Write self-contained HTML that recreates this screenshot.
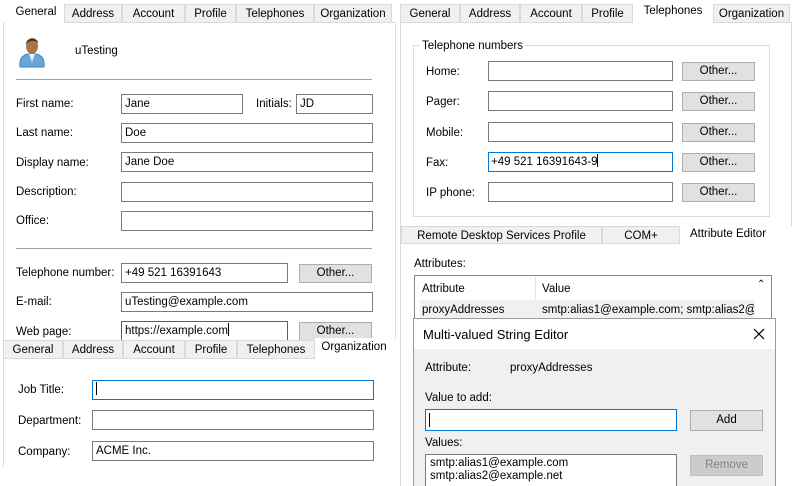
<!DOCTYPE html>
<html><head><meta charset="utf-8"><style>
*{box-sizing:border-box;margin:0;padding:0}
html,body{width:799px;height:486px;overflow:hidden}
body{background:#fff;position:relative;font-family:"Liberation Sans",sans-serif;font-size:11.5px;color:#000}
.a{position:absolute;white-space:nowrap}
.t{position:absolute;background:#f0f0f0;border:1px solid #d9d9d9;border-bottom:none;text-align:center;line-height:18px;height:19px;white-space:nowrap}
.ts{position:absolute;text-align:center;line-height:18px;background:#fff;white-space:nowrap}
.i{position:absolute;border:1px solid #7a7a7a;background:#fff;height:20px;line-height:18px;padding-left:3px;white-space:nowrap;overflow:hidden}
.f{border-color:#0078d7}
.b{position:absolute;border:1px solid #adadad;background:#e1e1e1;height:19px;line-height:17px;text-align:center}
.l{position:absolute;line-height:14px;white-space:nowrap}
.hr{position:absolute;height:1px;background:#a0a0a0}
.cur{display:inline-block;width:1px;height:13px;background:#000;vertical-align:-2px}
</style></head><body>
<!-- left top panel -->
<div class="a" style="left:3px;top:22px;width:393px;height:318px;border-left:1px solid #d9d9d9;border-right:1px solid #e3e3e3"></div>
<div class="ts" style="left:8px;top:3px;width:56px">General</div>
<div class="t" style="left:64px;top:4px;width:58px">Address</div>
<div class="t" style="left:122px;top:4px;width:63px">Account</div>
<div class="t" style="left:185px;top:4px;width:51px">Profile</div>
<div class="t" style="left:236px;top:4px;width:78px">Telephones</div>
<div class="t" style="left:314px;top:4px;width:78px">Organization</div>
<div class="a" style="left:64px;top:22px;width:332px;height:1px;background:#d9d9d9"></div>
<svg class="a" style="left:18px;top:34px" width="28" height="34" viewBox="0 0 28 34">
<path d="M2 33 C1 24 5 21 10 20 L18 20 C23 21 27 24 26 33 Z" fill="#6aa7d8" stroke="#3f7fb8"/>
<path d="M11 20 L14 28 L17 20 Z" fill="#e8f2fb"/>
<ellipse cx="14" cy="12" rx="6" ry="8" fill="#a8764a"/>
<path d="M8 10 C8 3 20 3 20 9 C18 6 11 6 8 10Z" fill="#3a3a3a"/>
</svg>
<div class="l" style="left:75px;top:44px">uTesting</div>
<div class="hr" style="left:16px;top:79px;width:356px"></div>
<div class="l" style="left:16px;top:97px">First name:</div>
<div class="i" style="left:121px;top:94px;width:122px">Jane</div>
<div class="l" style="left:256px;top:97px">Initials:</div>
<div class="i" style="left:296px;top:94px;width:77px">JD</div>
<div class="l" style="left:16px;top:126px">Last name:</div>
<div class="i" style="left:121px;top:123px;width:252px">Doe</div>
<div class="l" style="left:16px;top:156px">Display name:</div>
<div class="i" style="left:121px;top:152px;width:252px">Jane Doe</div>
<div class="l" style="left:16px;top:185px">Description:</div>
<div class="i" style="left:121px;top:182px;width:252px"></div>
<div class="l" style="left:16px;top:214px">Office:</div>
<div class="i" style="left:121px;top:211px;width:252px"></div>
<div class="hr" style="left:16px;top:248px;width:356px"></div>
<div class="l" style="left:16px;top:266px">Telephone number:</div>
<div class="i" style="left:121px;top:263px;width:167px">+49 521 16391643</div>
<div class="b" style="left:299px;top:264px;width:73px">Other...</div>
<div class="l" style="left:16px;top:295px">E-mail:</div>
<div class="i" style="left:121px;top:292px;width:252px">uTesting@example.com</div>
<div class="l" style="left:16px;top:325px">Web page:</div>
<div class="i f" style="left:121px;top:321px;width:167px">https://example.com<span class="cur"></span></div>
<div class="b" style="left:299px;top:322px;width:73px">Other...</div>
<!-- bottom left panel -->
<div class="a" style="left:0;top:340px;width:398px;height:146px;background:#fff"></div>
<div class="a" style="left:3px;top:358px;width:393px;height:109px;border-left:1px solid #d9d9d9"></div>
<div class="t" style="left:3px;top:340px;width:60px">General</div>
<div class="t" style="left:63px;top:340px;width:60px">Address</div>
<div class="t" style="left:123px;top:340px;width:62px">Account</div>
<div class="t" style="left:185px;top:340px;width:52px">Profile</div>
<div class="t" style="left:237px;top:340px;width:78px">Telephones</div>
<div class="a" style="left:3px;top:358px;width:312px;height:1px;background:#d9d9d9"></div>
<div class="ts" style="left:315px;top:338px;width:78px">Organization</div>
<div class="l" style="left:18px;top:383px">Job Title:</div>
<div class="i f" style="left:92px;top:380px;width:282px"><span class="cur"></span></div>
<div class="l" style="left:18px;top:414px">Department:</div>
<div class="i" style="left:92px;top:410px;width:282px"></div>
<div class="l" style="left:18px;top:445px">Company:</div>
<div class="i" style="left:92px;top:441px;width:282px">ACME Inc.</div>
<!-- right top panel -->
<div class="a" style="left:400px;top:22px;width:392px;height:204px;border-left:1px solid #d9d9d9;border-right:1px solid #d9d9d9"></div>
<div class="t" style="left:400px;top:4px;width:60px">General</div>
<div class="t" style="left:460px;top:4px;width:60px">Address</div>
<div class="t" style="left:520px;top:4px;width:62px">Account</div>
<div class="t" style="left:582px;top:4px;width:51px">Profile</div>
<div class="ts" style="left:633px;top:2px;width:80px">Telephones</div>
<div class="t" style="left:713px;top:4px;width:77px">Organization</div>
<div class="a" style="left:400px;top:22px;width:233px;height:1px;background:#d9d9d9"></div>
<div class="a" style="left:713px;top:22px;width:79px;height:1px;background:#d9d9d9"></div>
<div class="a" style="left:413px;top:45px;width:357px;height:172px;border:1px solid #dcdcdc"></div>
<div class="l" style="left:420px;top:39px;background:#fff;padding:0 2px">Telephone numbers</div>
<div class="l" style="left:426px;top:65px">Home:</div>
<div class="i" style="left:488px;top:61px;width:185px"></div>
<div class="b" style="left:682px;top:62px;width:73px">Other...</div>
<div class="l" style="left:426px;top:95px">Pager:</div>
<div class="i" style="left:488px;top:91px;width:185px"></div>
<div class="b" style="left:682px;top:92px;width:73px">Other...</div>
<div class="l" style="left:426px;top:126px">Mobile:</div>
<div class="i" style="left:488px;top:122px;width:185px"></div>
<div class="b" style="left:682px;top:123px;width:73px">Other...</div>
<div class="l" style="left:426px;top:156px">Fax:</div>
<div class="i f" style="left:488px;top:152px;width:185px;padding-left:2px">+49 521 16391643-9<span class="cur"></span></div>
<div class="b" style="left:682px;top:153px;width:73px">Other...</div>
<div class="l" style="left:426px;top:186px">IP phone:</div>
<div class="i" style="left:488px;top:182px;width:185px"></div>
<div class="b" style="left:682px;top:183px;width:73px">Other...</div>
<!-- right bottom panel -->
<div class="a" style="left:400px;top:226px;width:399px;height:260px;background:#fff;border-left:1px solid #d9d9d9"></div>
<div class="t" style="left:401px;top:226px;width:201px;height:18px">Remote Desktop Services Profile</div>
<div class="t" style="left:602px;top:226px;width:78px;height:18px">COM+</div>
<div class="a" style="left:401px;top:243px;width:279px;height:1px;background:#d9d9d9"></div>
<div class="ts" style="left:680px;top:225px;width:96px">Attribute Editor</div>
<div class="l" style="left:414px;top:257px">Attributes:</div>
<div class="a" style="left:414px;top:275px;width:358px;height:50px;border:1px solid #828790;background:#fff"></div>
<div class="l" style="left:422px;top:282px">Attribute</div>
<div class="a" style="left:535px;top:277px;width:1px;height:22px;background:#e5e5e5"></div>
<div class="l" style="left:542px;top:282px">Value</div>
<div class="l" style="left:757px;top:278px;font-size:10px">&#8963;</div>
<div class="a" style="left:420px;top:300px;width:335px;height:18px;background:#f0f0f0"></div>
<div class="l" style="left:422px;top:303px">proxyAddresses</div>
<div class="l" style="left:542px;top:303px;width:212px;overflow:hidden">smtp:alias1@example.com; smtp:alias2@example.net</div>
<!-- dialog -->
<div class="a" style="left:413px;top:318px;width:363px;height:170px;border:1px solid #9a9a9a;background:#f0f0f0"></div>
<div class="a" style="left:414px;top:319px;width:361px;height:30px;background:#fff"></div>
<div class="l" style="left:423px;top:328px;font-size:13px">Multi-valued String Editor</div>
<svg class="a" style="left:753px;top:328px" width="12" height="12"><path d="M1 1L11 11M11 1L1 11" stroke="#000" stroke-width="1.2"/></svg>
<div class="l" style="left:425px;top:361px">Attribute:</div>
<div class="l" style="left:510px;top:361px">proxyAddresses</div>
<div class="l" style="left:425px;top:391px">Value to add:</div>
<div class="i f" style="left:425px;top:409px;width:252px;height:22px"><span class="cur" style="height:14px;margin-top:3px"></span></div>
<div class="b" style="left:690px;top:410px;width:73px;height:21px;line-height:19px">Add</div>
<div class="l" style="left:425px;top:436px">Values:</div>
<div class="a" style="left:425px;top:454px;width:252px;height:40px;border:1px solid #7a7a7a;border-bottom:none;background:#fff"></div>
<div class="l" style="left:430px;top:457px;line-height:13px">smtp:alias1@example.com<br>smtp:alias2@example.net</div>
<div class="b" style="left:690px;top:455px;width:73px;height:21px;line-height:19px;color:#838383;background:#ccc;border-color:#bfbfbf">Remove</div>
</body></html>
